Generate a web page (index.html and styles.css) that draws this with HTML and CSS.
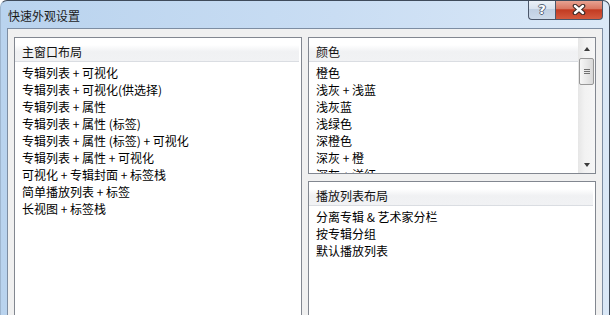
FILE: index.html
```html
<!DOCTYPE html>
<html lang="zh-CN">
<head>
    <meta charset="UTF-8">
    <meta name="viewport" content="width=device-width, initial-scale=1.0">
    <title>快速外观设置</title>
    <link rel="stylesheet" href="styles.css">
</head>
<body>
    <div class="window">
        <!-- Title bar -->
        <div class="titlebar">
            <span class="title">快速外观设置</span>
            <div class="caption-buttons">
                <div class="cap-btn help">?</div>
                <div class="cap-btn close">
                    <svg width="14" height="11" viewBox="0 0 14 11">
                        <path d="M3 2 L11 9 M11 2 L3 9" stroke="#3a2a28" stroke-width="4.6" stroke-linecap="round"/>
                        <path d="M3 2 L11 9 M11 2 L3 9" stroke="#ffffff" stroke-width="2.4" stroke-linecap="round"/>
                    </svg>
                </div>
            </div>
        </div>

        <!-- Client area -->
        <div class="client">
            <div class="panel">
                <div class="list">
                    <div class="group-header">主窗口布局</div>
                    <ul class="items">
                        <li>专辑列表 + 可视化</li>
                        <li>专辑列表 + 可视化(供选择)</li>
                        <li>专辑列表 + 属性</li>
                        <li>专辑列表 + 属性 (标签)</li>
                        <li>专辑列表 + 属性 (标签) + 可视化</li>
                        <li>专辑列表 + 属性 + 可视化</li>
                        <li>可视化 + 专辑封面 + 标签栈</li>
                        <li>简单播放列表 + 标签</li>
                        <li>长视图 + 标签栈</li>
                    </ul>
                </div>
            </div>

            <div class="right-col">
                <div class="panel panel-colors">
                    <div class="list">
                        <div class="group-header flush">颜色</div>
                        <ul class="items">
                            <li>橙色</li>
                            <li>浅灰 + 浅蓝</li>
                            <li>浅灰蓝</li>
                            <li>浅绿色</li>
                            <li>深橙色</li>
                            <li>深灰 + 橙</li>
                            <li>深灰 + 洋红</li>
                        </ul>
                    </div>
                    <div class="scrollbar">
                        <div class="sb-arrow"><span class="tri up"></span></div>
                        <div class="sb-track">
                            <div class="sb-thumb">
                                <span class="grip"></span>
                                <span class="grip"></span>
                                <span class="grip"></span>
                            </div>
                        </div>
                        <div class="sb-arrow"><span class="tri down"></span></div>
                    </div>
                </div>

                <div class="panel panel-playlist">
                    <div class="list">
                        <div class="group-header">播放列表布局</div>
                        <ul class="items">
                            <li>分离专辑 &amp; 艺术家分栏</li>
                            <li>按专辑分组</li>
                            <li>默认播放列表</li>
                        </ul>
                    </div>
                </div>
            </div>
        </div>
    </div>
</body>
</html>
```

FILE: styles.css
```css
body {
    margin: 0;
    background: #fff;
    color: #000;
    font-family: "Noto Sans CJK SC", "Liberation Sans", sans-serif;
    font-size: 12px;
}
.window {
    width: 610px;
    height: 315px;
    box-sizing: border-box;
    border: 1px solid #3f4b5b;
    border-left-color: #9fb6cf;
    border-bottom: none;
    border-radius: 7px 7px 0 0;
    padding: 0 6px;
    background: linear-gradient(to right, #b9d3ee, #c9ddf3 55%, #dae8f7);
    overflow: hidden;
    display: flex;
    flex-direction: column;
}
.titlebar {
    height: 27px;
    flex: none;
    display: flex;
    align-items: flex-start;
}
.title {
    padding: 6px 0 0 1px;
    line-height: 17px;
    color: #1b1b1b;
}
.caption-buttons {
    margin-left: auto;
    margin-top: -1px;
    display: flex;
}
.cap-btn {
    height: 20px;
    box-sizing: border-box;
    border: 1px solid #4b576a;
    border-top: none;
    display: flex;
    align-items: center;
    justify-content: center;
}
.help {
    width: 27px;
    border-right: none;
    border-radius: 0 0 0 4px;
    background: linear-gradient(#eef3f9, #d9e3ef 45%, #c0cfe2 50%, #cddaea);
    color: #fff;
    font: bold 13px "DejaVu Sans", sans-serif;
    text-shadow: 1px 0 #56657a, -1px 0 #56657a, 0 1px #56657a, 0 -1px #56657a;
}
.close {
    width: 48px;
    border-radius: 0 0 4px 0;
    background: linear-gradient(#e9a898, #da7863 45%, #c23b22 52%, #d45a3f);
}
.client {
    height: 300px;
    flex: none;
    background: #f0f0f0;
    border: 1px solid #7d8da2;
    border-bottom: none;
    padding: 8px 6px 0;
    display: grid;
    grid-template-columns: 1fr 1fr;
    column-gap: 6px;
}
.right-col {
    display: flex;
    flex-direction: column;
    gap: 7px;
    min-height: 0;
}
.panel {
    background: #fff;
    border: 1px solid #828790;
    display: flex;
    overflow: hidden;
    min-height: 0;
}
.panel-colors {
    height: 137px;
    box-sizing: border-box;
    flex: none;
}
.panel-playlist {
    flex: 1;
}
.list {
    flex: 1;
    min-width: 0;
    overflow: hidden;
}
.group-header {
    height: 24px;
    box-sizing: border-box;
    margin-right: 2px;
    padding: 5px 0 0 7px;
    line-height: 17px;
    border-bottom: 1px solid #dadde2;
    background: linear-gradient(#fff 30%, #f0f1f3 60%, #f1f2f4);
    color: #111;
}
.group-header.flush {
    margin-right: 0;
}
.items {
    list-style: none;
    margin: 0;
    padding: 2px 0 0 7px;
    line-height: 17px;
    white-space: nowrap;
}
.scrollbar {
    width: 17px;
    flex: none;
    display: flex;
    flex-direction: column;
    background: linear-gradient(to right, #e6e6e6, #f2f2f2 40%, #f6f6f6);
}
.sb-arrow {
    height: 17px;
    flex: none;
    display: flex;
    align-items: center;
    justify-content: center;
}
.tri {
    width: 0;
    height: 0;
    border-left: 3.5px solid transparent;
    border-right: 3.5px solid transparent;
}
.tri.up {
    border-bottom: 4px solid #3c3c3c;
    margin-top: 4px;
}
.tri.down {
    border-top: 4px solid #3c3c3c;
}
.sb-track {
    flex: 1;
    padding: 3px 1px 0;
}
.sb-thumb {
    height: 27px;
    box-sizing: border-box;
    border: 1px solid #979797;
    border-radius: 2px;
    background: linear-gradient(to right, #f6f6f6, #e8e8e8 50%, #d8d8d8);
    display: flex;
    flex-direction: column;
    align-items: center;
    justify-content: center;
    gap: 1px;
}
.grip {
    width: 6px;
    height: 1px;
    background: #707070;
}
```
